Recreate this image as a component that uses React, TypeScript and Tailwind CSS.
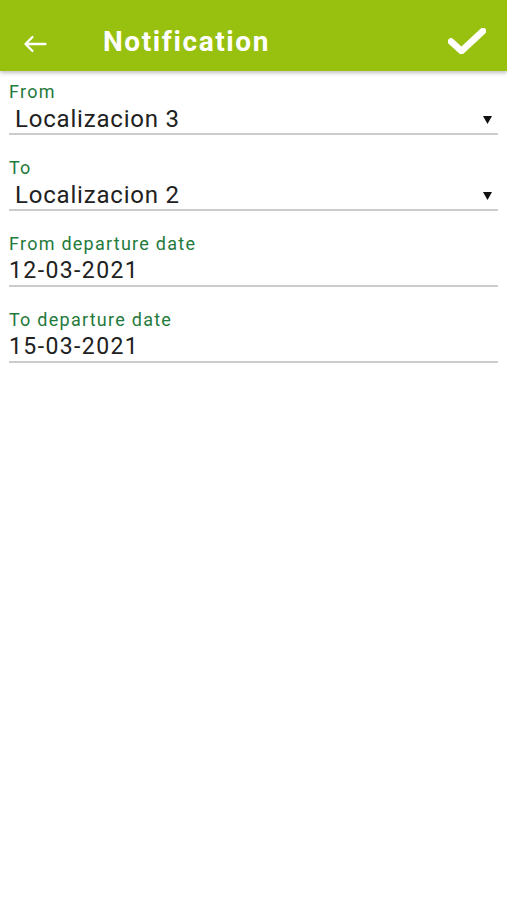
type Field = { label: string; value: string; select?: boolean };

const fields: Field[] = [
  { label: "From", value: "Localizacion 3", select: true },
  { label: "To", value: "Localizacion 2", select: true },
  { label: "From departure date", value: "12-03-2021" },
  { label: "To departure date", value: "15-03-2021" },
];

function BackIcon() {
  return (
    <svg width="24" height="18" viewBox="0 0 24 18" fill="none">
      <path
        d="M22.5 9H2.5 M9.5 2 L2.5 9 L9.5 16"
        stroke="white"
        strokeWidth="2.3"
        strokeLinecap="round"
        strokeLinejoin="round"
      />
    </svg>
  );
}

function CheckIcon() {
  return (
    <svg width="38" height="26" viewBox="0 0 38 26" fill="none">
      <path
        d="M3 13.5 L13.5 23 L35 3"
        stroke="white"
        strokeWidth="6.5"
        strokeLinecap="round"
        strokeLinejoin="round"
      />
    </svg>
  );
}

export default function App() {
  return (
    <div className="min-h-[900px] bg-white font-['Roboto','Liberation_Sans',sans-serif] text-[#212121]">
      <header className="h-[71px] bg-[#97c00f] flex items-center pt-[12px] shadow-[0_2px_4px_rgba(0,0,0,0.25)] relative">
        <div className="w-[103px] flex pl-[23px] pt-[4px]">
          <BackIcon />
        </div>
        <h1 className="flex-1 text-white text-[28px] tracking-[1.6px] font-bold leading-none">
          Notification
        </h1>
        <div className="pr-[21px] pb-[2px]">
          <CheckIcon />
        </div>
      </header>

      <div className="px-[9px] pt-[11px] flex flex-col gap-[23px]">
        {fields.map((f) => (
          <div key={f.label} className="flex flex-col">
            <div className="text-[18px] leading-[20px] tracking-[1.25px] text-[#1f7a3c]">
              {f.label}
            </div>
            <div className="mt-[3px] flex items-center border-b-2 border-[#cccccc] h-[30px] pb-[1px]">
              {f.select ? (
                <span className="flex-1 pl-[6px] text-[24px] leading-[28px] tracking-[0.8px]">
                  {f.value}
                </span>
              ) : (
                <span className="flex-1 text-[23px] leading-[28px] tracking-[1.4px]">
                  {f.value}
                </span>
              )}
              {f.select && (
                <svg width="9" height="8" viewBox="0 0 9 8" className="mr-[6px] mt-[2px]">
                  <path d="M0 0 H9 L4.5 8 Z" fill="#111" />
                </svg>
              )}
            </div>
          </div>
        ))}
      </div>
    </div>
  );
}
